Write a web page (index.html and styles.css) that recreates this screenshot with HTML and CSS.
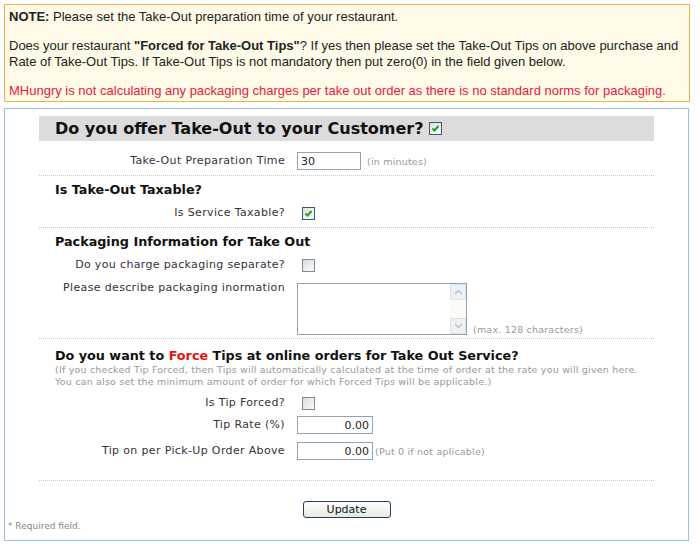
FILE: index.html
```html
<!DOCTYPE html>
<html lang="en">
<head>
    <meta charset="UTF-8">
    <title>Take-Out Settings</title>
    <link rel="stylesheet" href="styles.css">
</head>
<body>

    <!-- Nota superior -->
    <div class="note">
        <p><b>NOTE:</b> Please set the Take-Out preparation time of your restaurant.</p>
        <p>Does your restaurant <b>"Forced for Take-Out Tips"</b>? If yes then please set the Take-Out Tips on above purchase and Rate of Take-Out Tips. If Take-Out Tips is not mandatory then put zero(0) in the field given below.</p>
        <p class="warn">MHungry is not calculating any packaging charges per take out order as there is no standard norms for packaging.</p>
    </div>

    <div class="panel">
        <form class="form">
            <h2 class="banner">Do you offer Take-Out to your Customer? <input type="checkbox" checked></h2>

            <div class="row">
                <label>Take-Out Preparation Time</label>
                <div class="field"><input type="text" class="txt time" value="30"><span class="hint">(in minutes)</span></div>
            </div>
            <div class="sep"></div>

            <h3>Is Take-Out Taxable?</h3>
            <div class="row">
                <label>Is Service Taxable?</label>
                <div class="field"><input type="checkbox" checked></div>
            </div>
            <div class="sep"></div>

            <h3>Packaging Information for Take Out</h3>
            <div class="row">
                <label>Do you charge packaging separate?</label>
                <div class="field"><input type="checkbox"></div>
            </div>
            <div class="row top">
                <label>Please describe packaging inormation</label>
                <div class="field bottom">
                    <div class="area-box">
                        <textarea class="area"></textarea>
                        <div class="vbar">
                            <span class="arrow up"></span>
                            <span class="arrow down"></span>
                        </div>
                    </div>
                    <span class="hint">(max. 128 characters)</span>
                </div>
            </div>
            <div class="sep"></div>

            <h3 class="tight">Do you want to <span class="red">Force</span> Tips at online orders for Take Out Service?</h3>
            <p class="small">(If you checked Tip Forced, then Tips will automatically calculated at the time of order at the rate you will given here.<br>You can also set the minimum amount of order for which Forced Tips will be applicable.)</p>
            <div class="row">
                <label>Is Tip Forced?</label>
                <div class="field"><input type="checkbox"></div>
            </div>
            <div class="row close">
                <label>Tip Rate (%)</label>
                <div class="field"><input type="text" class="txt money" value="0.00"></div>
            </div>
            <div class="row">
                <label>Tip on per Pick-Up Order Above</label>
                <div class="field"><input type="text" class="txt money" value="0.00"><span class="hint near">(Put 0 if not aplicable)</span></div>
            </div>
            <div class="sep last"></div>
        </form>

        <div class="actions"><button type="button">Update</button></div>
        <div class="req">* Required field.</div>
    </div>

</body>
</html>
```

FILE: styles.css
```css
body {
    margin: 4px;
    font-family: "DejaVu Sans", Verdana, sans-serif;
    color: #333;
    background: #fff;
}

/* Nota */
.note {
    width: 677px;
    padding: 4px 3px 2px 4px;
    border: 1px solid #f0b050;
    background: #fffbe8;
    font-family: "Liberation Sans", Arial, sans-serif;
    font-size: 13px;
    line-height: 16px;
    color: #222;
}
.note p { margin: 0 0 13px; }
.note p:last-child { margin-bottom: 0; }
.note .warn { color: #e8203c; }

/* Panel principal */
.panel {
    width: 683px;
    margin-top: 6px;
    border: 1px solid #9fc0dc;
    padding: 7px 0 8px;
}
.form {
    margin: 0 34px;
}
.banner {
    margin: 0;
    height: 25px;
    padding-left: 16px;
    display: flex;
    align-items: center;
    background: #dcdcdc;
    font-size: 16px;
    color: #111;
}
.banner input { margin-left: 8px; }

h3 {
    margin: 6px 0 4px;
    padding-left: 16px;
    font-size: 12.75px;
    line-height: 16px;
    color: #111;
}
h3.tight { margin: 9px 0 0; }
.red { color: #e81010; }

.small {
    margin: 0 0 4px;
    padding-left: 16px;
    font-size: 9.5px;
    letter-spacing: 0.2px;
    line-height: 12px;
    color: #999;
}

.row {
    display: flex;
    align-items: center;
    min-height: 22px;
    margin-top: 4px;
}
.form h2 + .row { margin-top: 9px; }
.row.close { margin-top: 0; }
.row.top { align-items: flex-start; }
.row label {
    width: 246px;
    margin-right: 12px;
    text-align: right;
    font-size: 11px;
    letter-spacing: 0.35px;
    line-height: 16px;
    color: #3a2f3a;
}
.field {
    display: flex;
    align-items: center;
}
.field.bottom { align-items: flex-end; margin-top: 3px; }

.txt {
    box-sizing: border-box;
    height: 18px;
    margin: 0;
    padding: 0 3px;
    border: 1px solid #8fa3b5;
    font-family: "DejaVu Sans", Verdana, sans-serif;
    font-size: 11px;
    color: #222;
}
.txt.time { width: 64px; }
.txt.money { width: 76px; text-align: right; }

.hint {
    margin-left: 6px;
    font-size: 9.5px;
    letter-spacing: 0.2px;
    color: #999;
}
.hint.near { margin-left: 2px; }

input[type="checkbox"] {
    appearance: none;
    -webkit-appearance: none;
    width: 13px;
    height: 13px;
    margin: 0 0 0 5px;
    border: 1px solid #7a8ea3;
    background: linear-gradient(135deg, #dcdcd6, #fbfbfb);
}
input[type="checkbox"]:checked {
    border-color: #3b5a78;
    background: url("data:image/svg+xml,%3Csvg xmlns='http://www.w3.org/2000/svg' viewBox='0 0 11 11'%3E%3Cpath d='M2.5 5.5l2 2 4-4.5' fill='none' stroke='%2320a020' stroke-width='2'/%3E%3C/svg%3E") center / 11px 11px no-repeat, linear-gradient(135deg, #e2e2dc, #fbfbfb);
}

/* Textarea con barra */
.area-box {
    display: flex;
    width: 170px;
    height: 52px;
    box-sizing: border-box;
    border: 1px solid #8fa3b5;
    background: #fff;
}
.area {
    flex: 1;
    border: none;
    resize: none;
    overflow: hidden;
    margin: 0;
    padding: 2px;
    outline: none;
}
.vbar {
    width: 16px;
    display: flex;
    flex-direction: column;
    justify-content: space-between;
    background: #fafaf7;
}
.arrow {
    height: 16px;
    box-sizing: border-box;
    border: 1px solid #dde3ea;
    background: #eef1f4 no-repeat center / 9px 6px;
}
.arrow.up {
    background-image: url("data:image/svg+xml,%3Csvg xmlns='http://www.w3.org/2000/svg' viewBox='0 0 9 6'%3E%3Cpath d='M1 5l3.5-3.5L8 5' fill='none' stroke='%23b8c4d0' stroke-width='1.5'/%3E%3C/svg%3E");
}
.arrow.down {
    background-image: url("data:image/svg+xml,%3Csvg xmlns='http://www.w3.org/2000/svg' viewBox='0 0 9 6'%3E%3Cpath d='M1 1l3.5 3.5L8 1' fill='none' stroke='%23b8c4d0' stroke-width='1.5'/%3E%3C/svg%3E");
}

.sep {
    margin-top: 3px;
    border-top: 1px dotted #c8c8c8;
}
.sep.last { margin-top: 18px; }

.actions {
    display: flex;
    justify-content: center;
    padding-top: 20px;
}
.actions button {
    width: 88px;
    height: 17px;
    padding: 0;
    border: 1px solid #1c3f6a;
    border-radius: 3px;
    background: linear-gradient(#ffffff, #e8e8e2);
    font-family: "DejaVu Sans", Tahoma, sans-serif;
    font-size: 11px;
    color: #111;
}
.req {
    margin-top: 2px;
    padding-left: 3px;
    font-size: 9px;
    line-height: 12px;
    color: #888;
}
```
